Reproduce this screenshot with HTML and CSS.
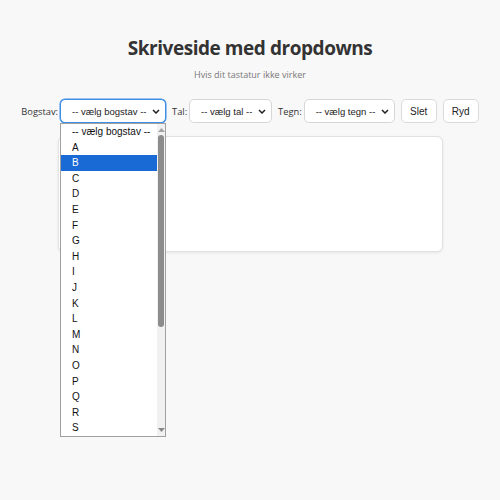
FILE: index.html
```html
<!DOCTYPE html>
<html lang="da">
<head>
<meta charset="utf-8">
<title>Skriveside med dropdowns</title>
<link rel="stylesheet" href="styles.css">
</head>
<body>
<div class="page">
  <h1 class="title">Skriveside med dropdowns</h1>
  <p class="sub">Hvis dit tastatur ikke virker</p>
  <div class="controls">
    <span class="label">Bogstav:</span>
    <div class="select-wrap">
      <div class="select select-letter focused">
        <span class="select-text">-- vælg bogstav --</span>
        <svg class="chev" width="8" height="5" viewBox="0 0 8 5"><path d="M1 1 L4 4 L7 1" fill="none" stroke="#222" stroke-width="1.5"/></svg>
      </div>
      <div class="listbox">
        <div class="options">
          <div class="opt">-- vælg bogstav --</div>
          <div class="opt">A</div>
          <div class="opt sel">B</div>
          <div class="opt">C</div>
          <div class="opt">D</div>
          <div class="opt">E</div>
          <div class="opt">F</div>
          <div class="opt">G</div>
          <div class="opt">H</div>
          <div class="opt">I</div>
          <div class="opt">J</div>
          <div class="opt">K</div>
          <div class="opt">L</div>
          <div class="opt">M</div>
          <div class="opt">N</div>
          <div class="opt">O</div>
          <div class="opt">P</div>
          <div class="opt">Q</div>
          <div class="opt">R</div>
          <div class="opt">S</div>
        </div>
        <div class="scrollbar">
          <svg class="arrow" width="7" height="5" viewBox="0 0 7 5"><path d="M0 5 L3.5 1 L7 5 Z" fill="#a3a3a3"/></svg>
          <div class="track"><div class="thumb"></div></div>
          <svg class="arrow" width="7" height="5" viewBox="0 0 7 5"><path d="M0 0 L3.5 4 L7 0 Z" fill="#8a8a8a"/></svg>
        </div>
      </div>
    </div>
    <span class="label">Tal:</span>
    <div class="select select-num">
      <span class="select-text">-- vælg tal --</span>
      <svg class="chev" width="8" height="5" viewBox="0 0 8 5"><path d="M1 1 L4 4 L7 1" fill="none" stroke="#222" stroke-width="1.5"/></svg>
    </div>
    <span class="label">Tegn:</span>
    <div class="select select-sign">
      <span class="select-text">-- vælg tegn --</span>
      <svg class="chev" width="8" height="5" viewBox="0 0 8 5"><path d="M1 1 L4 4 L7 1" fill="none" stroke="#222" stroke-width="1.5"/></svg>
    </div>
    <button class="btn">Slet</button>
    <button class="btn">Ryd</button>
  </div>
  <div class="box"></div>
</div>
</body>
</html>
```
FILE: styles.css
```css
html, body {
  margin: 0;
  padding: 0;
}
body {
  background: #f8f8f8;
  font-family: "Open Sans", "Noto Sans", sans-serif;
  color: #333;
}
.page {
  box-sizing: border-box;
  min-height: 500px;
  padding-top: 36px;
  display: flex;
  flex-direction: column;
  align-items: center;
}
.title {
  margin: 0;
  font-size: 19px;
  line-height: 24px;
  font-weight: 700;
  letter-spacing: -0.45px;
  color: #333;
}
.sub {
  margin: 8px 0 0;
  font-size: 9px;
  line-height: 14px;
  color: #777;
}
.controls {
  margin-top: 17px;
  display: flex;
  align-items: center;
  gap: 6px;
  height: 24px;
}
.label {
  font-size: 9.3px;
  color: #333;
  margin-right: -4px;
}
.select-wrap {
  position: relative;
  z-index: 5;
}
.select {
  box-sizing: border-box;
  height: 24px;
  background: #fff;
  border: 1px solid #d6d6d6;
  border-radius: 5px;
  display: flex;
  align-items: center;
  justify-content: space-between;
  padding: 0 5px 0 11px;
  font-family: "Liberation Sans", Arial, sans-serif;
  font-size: 9.5px;
  color: #222;
}
.select-letter { width: 106px; }
.select-num { width: 83px; }
.select-sign { width: 91px; }
.focused {
  border: 1px solid #3d8ee6;
  box-shadow: 0 0 0 0.5px #3d8ee6;
}
.chev { display: block; }
.btn {
  box-sizing: border-box;
  height: 24px;
  width: 36px;
  padding: 0;
  background: #fff;
  border: 1px solid #dadada;
  border-radius: 5px;
  font-family: "Liberation Sans", Arial, sans-serif;
  font-size: 10px;
  color: #222;
}
.listbox {
  position: absolute;
  top: 24px;
  left: 0;
  width: 106px;
  height: 314px;
  box-sizing: border-box;
  background: #fff;
  border: 1px solid #a0a0a0;
  display: flex;
  overflow: hidden;
}
.options {
  flex: 1;
  font-family: "Liberation Sans", Arial, sans-serif;
  font-size: 10px;
  color: #111;
}
.opt {
  height: 15.6px;
  line-height: 15.6px;
  padding-left: 11px;
  white-space: nowrap;
}
.opt.sel {
  background: #1a6ad6;
  color: #fff;
}
.scrollbar {
  width: 8px;
  background: #f1f1f1;
  display: flex;
  flex-direction: column;
  align-items: center;
}
.arrow {
  display: block;
  margin: 3px 0;
}
.track {
  flex: 1;
  width: 100%;
  display: flex;
  justify-content: center;
}
.thumb {
  width: 6px;
  height: 192px;
  background: #8c8c8c;
  border-radius: 3px;
}
.box {
  margin-top: 13px;
  width: 385px;
  height: 116px;
  box-sizing: border-box;
  background: #fff;
  border: 1px solid #e2e2e2;
  border-radius: 6px;
  box-shadow: 0 1px 3px rgba(0,0,0,0.08);
}
```
